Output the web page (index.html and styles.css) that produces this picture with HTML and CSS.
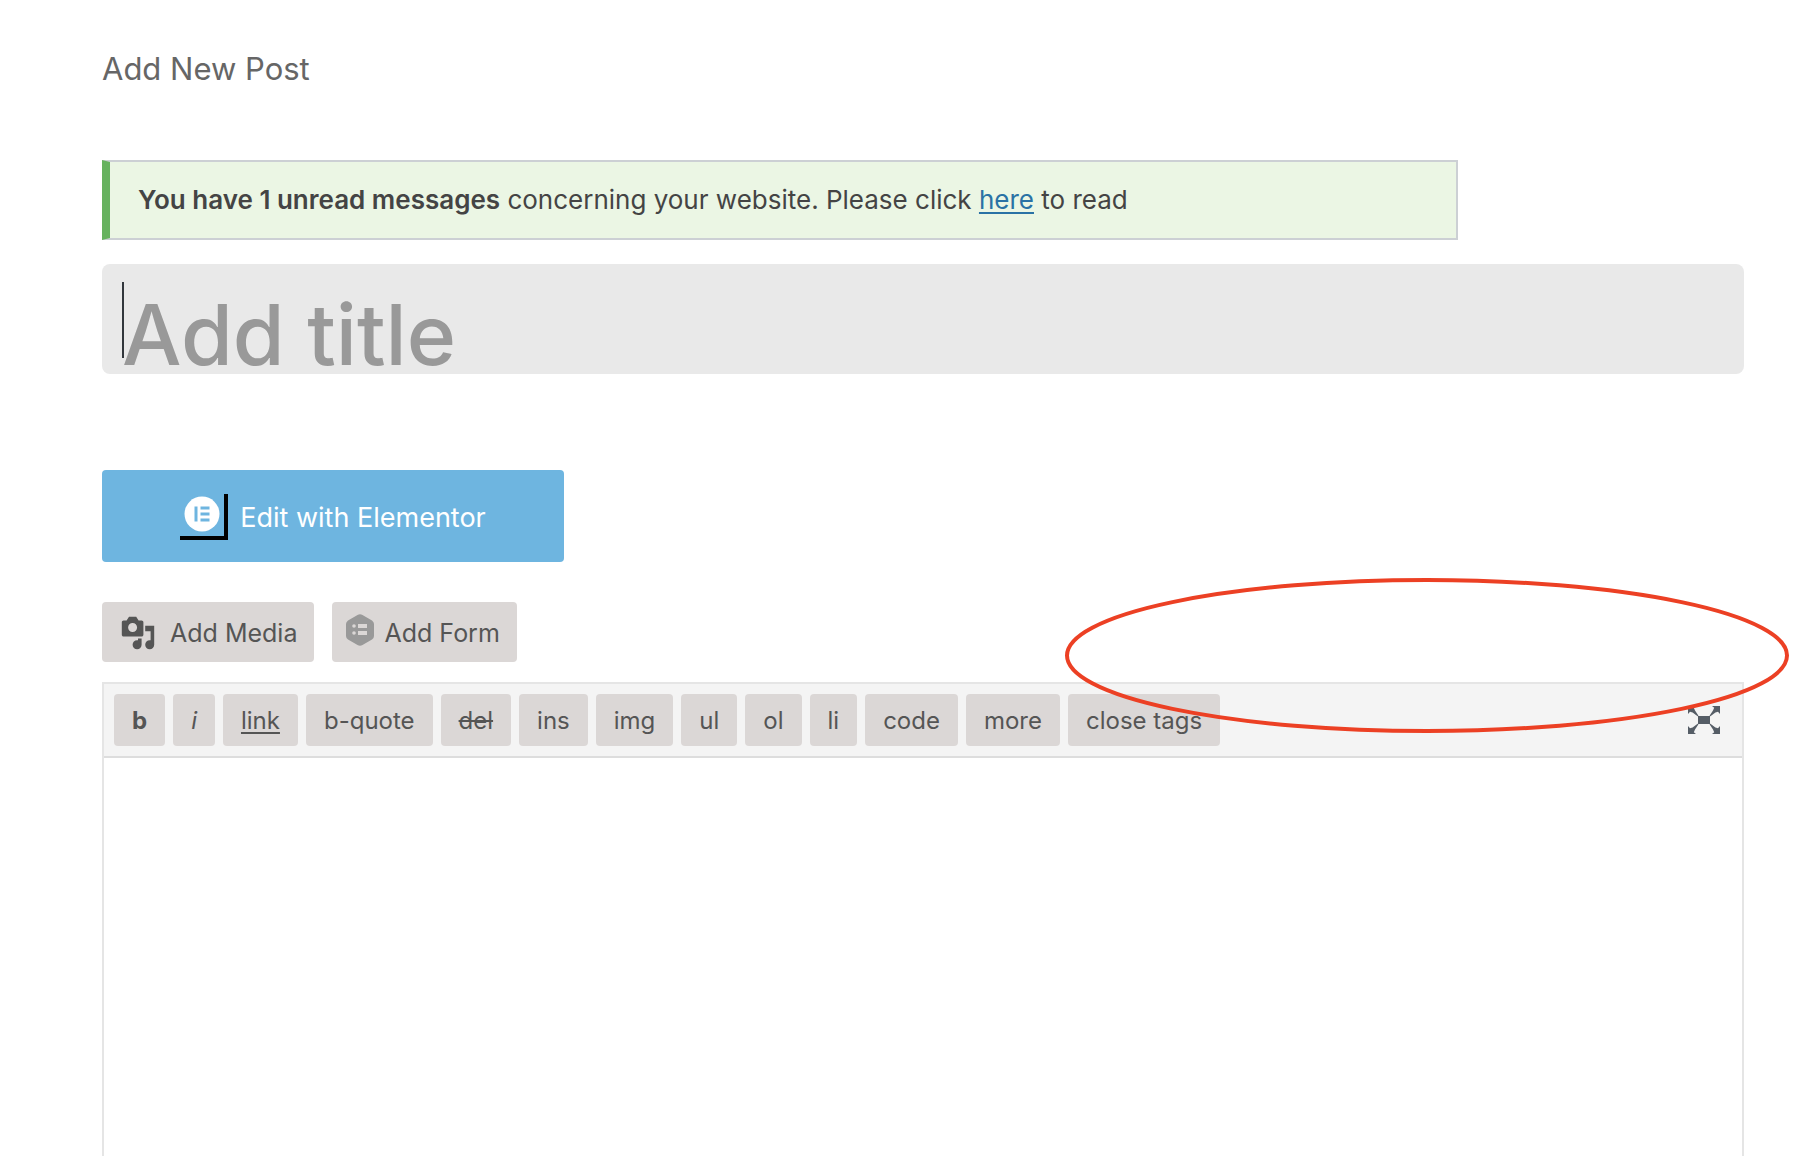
FILE: index.html
```html
<!DOCTYPE html>
<html lang="en">
<head>
<meta charset="utf-8">
<title>Add New Post</title>
<link rel="stylesheet" href="styles.css">
</head>
<body>
<main class="page">
  <h1 class="page-title">Add New Post</h1>

  <div class="notice">
    <p><strong>You have 1 unread messages</strong> concerning your website. Please click <a href="#">here</a> to read</p>
  </div>

  <div class="title-field">
    <input type="text" class="title-input" aria-label="Add title" placeholder="Add title">
    <span class="caret"></span>
  </div>

  <button type="button" class="elementor-button">
    <span class="elementor-mark">
      <svg width="36" height="36" viewBox="0 0 36 36" aria-hidden="true">
        <circle cx="18" cy="18" r="17.5" fill="#fff"/>
        <path d="M10.500 10.500h3v15h-3zM16.500 10.500h9v3h-9zM16.500 16.500h9v3h-9zM16.500 22.500h9v3h-9z" fill="#6eb5e0"/>
      </svg>
    </span>
    Edit with Elementor
  </button>

  <div class="media-buttons">
    <button type="button" class="media-button add-media">
      <svg width="36" height="36" viewBox="0 0 20 20" aria-hidden="true">
        <path d="M13 11V4c0-.55-.45-1-1-1h-1.670L9 1H5L3.670 3H2c-.55 0-1 .45-1 1v7c0 .55.45 1 1 1h10c.55 0 1-.45 1-1zM7 4.500c1.380 0 2.500 1.120 2.500 2.500S8.380 9.500 7 9.500 4.500 8.380 4.500 7 5.620 4.500 7 4.500zM14 6h5v10.500c0 1.380-1.120 2.500-2.500 2.500S14 17.880 14 16.500s1.120-2.500 2.500-2.500c.17 0 .34.020.5.050V9h-3V6zm-4 8.050V13h2v3.500c0 1.380-1.120 2.500-2.500 2.500S7 17.880 7 16.500 8.120 14 9.500 14c.17 0 .34.020.5.050z" fill="#555"/>
      </svg>
      Add Media
    </button>
    <button type="button" class="media-button add-form">
      <svg width="28" height="32" viewBox="0 0 28 32" aria-hidden="true">
        <path d="M11.500 1Q14-.6 16.500 1L26 6.500Q28 8 28 10V22Q28 24 26 25.500L16.500 31Q14 32.600 11.500 31L2 25.500Q0 24 0 22V10Q0 8 2 6.500Z" fill="#999"/>
        <path d="M12 10h9v4h-9zM12 17h9v4h-9z" fill="#dbd7d6"/>
        <circle cx="8" cy="12" r="1.800" fill="#dbd7d6"/>
        <circle cx="8" cy="19" r="1.800" fill="#dbd7d6"/>
      </svg>
      Add Form
    </button>
  </div>

  <section class="editor">
    <div class="toolbar" role="toolbar" aria-label="Text formatting">
      <button type="button" class="tag bold">b</button>
      <button type="button" class="tag italic">i</button>
      <button type="button" class="tag underline">link</button>
      <button type="button" class="tag">b-quote</button>
      <button type="button" class="tag strike">del</button>
      <button type="button" class="tag">ins</button>
      <button type="button" class="tag">img</button>
      <button type="button" class="tag">ul</button>
      <button type="button" class="tag">ol</button>
      <button type="button" class="tag">li</button>
      <button type="button" class="tag">code</button>
      <button type="button" class="tag">more</button>
      <button type="button" class="tag">close tags</button>
      <button type="button" class="fullscreen" aria-label="Distraction-free writing">
        <svg width="32" height="28" viewBox="0 0 32 28" aria-hidden="true">
          <path id="arrow" d="M0 0H8L5.800 1.800L7 4.500L10.300 9.600V10.300H9.600L4.600 6.600L2 5.800L0 8Z" fill="#555d66"/>
          <use href="#arrow" transform="matrix(-1 0 0 1 32 0)"/>
          <use href="#arrow" transform="matrix(1 0 0 -1 0 28)"/>
          <use href="#arrow" transform="matrix(-1 0 0 -1 32 28)"/>
          <path d="M10 10h12v8H10z" fill="#555d66"/>
        </svg>
      </button>
    </div>
    <textarea class="content" aria-label="Post content"></textarea>
    <svg class="highlight" width="724" height="156" viewBox="0 0 724 156" aria-hidden="true">
      <ellipse cx="362" cy="78.5" rx="360" ry="75.5" fill="none" stroke="#ec4024" stroke-width="4"/>
    </svg>
  </section>
</main>
</body>
</html>
```
FILE: styles.css
```css
* {
  box-sizing: border-box;
}

body {
  margin: 0;
  background: #fff;
  color: #444;
  font-family: Inter, "Liberation Sans", sans-serif;
  font-size: 26px;
}

button {
  border: 0;
  margin: 0;
  font-family: inherit;
  cursor: pointer;
}

.page {
  display: flex;
  flex-direction: column;
  min-height: 100vh;
  padding: 49px 74px 0 102px;
}

.page-title {
  margin: 0;
  color: #666;
  font-size: 31px;
  font-weight: 400;
  line-height: 40px;
}

.notice {
  max-width: 1356px;
  margin-top: 71px;
  padding: 18px 28px;
  background: #ebf6e4;
  border: 2px solid #ccd0d4;
  border-left: 8px solid #67b25f;
}

.notice p {
  margin: 0;
  line-height: 40px;
}

.notice strong {
  font-weight: 600;
}

.notice a {
  color: #2a72a5;
  text-decoration-thickness: 2px;
  text-underline-offset: 3px;
}

.title-field {
  position: relative;
  margin-top: 24px;
}

.title-input {
  display: block;
  width: 100%;
  height: 110px;
  padding: 30px 20px 0;
  border: 0;
  border-radius: 8px;
  outline: 0;
  background: #e9e9e9;
  color: #32373c;
  font-family: inherit;
  font-size: 84px;
  font-weight: 500;
  line-height: 80px;
}

.title-input::placeholder {
  color: #999;
  opacity: 1;
}

.caret {
  position: absolute;
  top: 18px;
  left: 20px;
  width: 2px;
  height: 76px;
  background: #32373c;
}

.elementor-button {
  display: flex;
  align-items: center;
  justify-content: center;
  gap: 12px;
  width: 462px;
  height: 92px;
  margin-top: 96px;
  padding: 2px 0 0;
  border-radius: 4px;
  background: #6eb5e0;
  color: #fff;
  font-size: 27px;
}

.elementor-mark {
  display: flex;
  width: 48px;
  height: 46px;
  padding: 2px 4px;
  border-right: 4px solid #000;
  border-bottom: 4px solid #000;
}

.media-buttons {
  display: flex;
  gap: 18px;
  margin-top: 40px;
}

.media-button {
  display: flex;
  align-items: center;
  height: 60px;
  border-radius: 4px;
  background: #dbd7d6;
  color: #555;
  font-size: 25px;
}

.add-media {
  gap: 14px;
  padding: 2px 17px 0 18px;
}

.add-form {
  gap: 10px;
  padding: 2px 17px 0 14px;
}

.add-form svg {
  margin-bottom: 6px;
}

.editor {
  position: relative;
  display: flex;
  flex: 1;
  flex-direction: column;
  margin-top: 20px;
  border: 2px solid #e5e5e5;
  border-bottom: 0;
}

.toolbar {
  display: flex;
  align-items: center;
  gap: 8px;
  padding: 10px;
  background: #f4f4f4;
  border-bottom: 2px solid #ddd;
}

.tag {
  height: 52px;
  padding: 0 18px;
  border-radius: 4px;
  background: #dbd7d6;
  color: #555;
  font-size: 24px;
}

.bold {
  font-weight: 700;
}

.italic {
  font-style: italic;
}

.underline {
  text-decoration: underline;
  text-decoration-thickness: 2px;
  text-underline-offset: 3px;
}

.strike {
  text-decoration: line-through;
}

.fullscreen {
  display: flex;
  margin-left: auto;
  padding: 12px;
  background: none;
}

.content {
  display: block;
  flex: 1;
  width: 100%;
  padding: 20px;
  border: 0;
  outline: 0;
  resize: none;
  background: #fff;
  font-family: inherit;
  font-size: 26px;
}

.highlight {
  position: absolute;
  top: -107px;
  right: -47px;
  pointer-events: none;
}
```
